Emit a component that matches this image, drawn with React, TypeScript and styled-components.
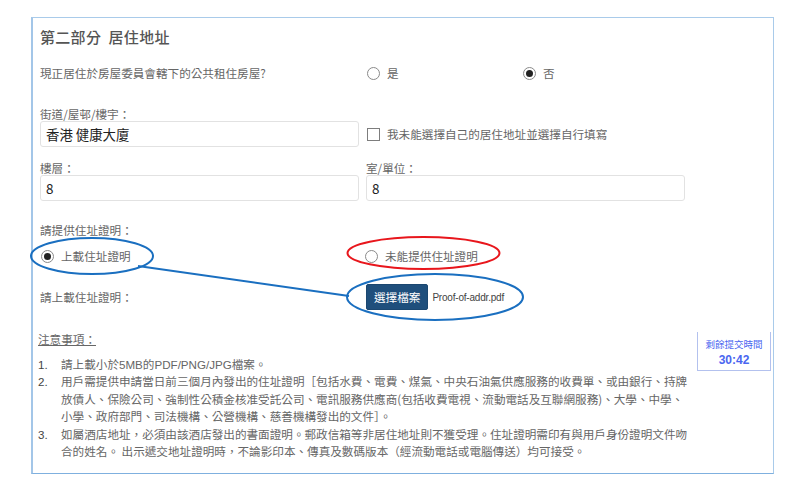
import React from "react";
import styled, { createGlobalStyle } from "styled-components";

const Global = createGlobalStyle`
  html, body { margin: 0; padding: 0; background: #fff; }
  body { font-family: "Noto Sans CJK TC", "Noto Sans", sans-serif; }
  * { box-sizing: border-box; }
`;

const Page = styled.div`
  position: relative;
  width: 800px;
  height: 489px;
  padding: 17px 0 0 31px;
  overflow: hidden;
`;

const Panel = styled.section`
  position: relative;
  width: 743px;
  height: 457px;
  border: 1px solid #a9cbea;
  border-left: 2px solid #a3c6e8;
  border-bottom-color: #7fb0df;
  padding: 9px 0 0 7px;
`;

const Title = styled.h2`
  margin: 0;
  font-size: 15px;
  line-height: 20px;
  font-weight: 500;
  color: #555;
  letter-spacing: 0.3px;
`;

const Row = styled.div<{ $top: number; $h?: number }>`
  display: grid;
  grid-template-columns: 319px 319px;
  column-gap: 7px;
  margin-top: ${(p) => p.$top}px;
  ${(p) => (p.$h ? `height: ${p.$h}px;` : "")}
  align-items: center;
`;

const Text = styled.div`
  font-size: 11.6px;
  line-height: 14px;
  color: #666;
`;

const Field = styled.label`
  display: flex;
  flex-direction: column;
`;

const Input = styled.input`
  height: 26px;
  width: 100%;
  border: 1px solid #e2e2e2;
  border-radius: 3px;
  padding: 0 5px;
  font-family: "Noto Sans CJK TC", sans-serif;
  font-size: 13.4px;
  color: #222;
  background: #fff;
  outline: none;
`;

const Choices = styled.div`
  display: flex;
  align-items: center;
`;

const Choice = styled.div<{ $w?: number; $shift?: number }>`
  display: flex;
  align-items: center;
  gap: 7px;
  ${(p) => (p.$w ? `width: ${p.$w}px;` : "")}
  margin-left: ${(p) => p.$shift ?? 0}px;
  font-size: 11.6px;
  color: #666;
`;

const RadioDot = styled.span<{ $on?: boolean }>`
  width: 13px;
  height: 13px;
  border-radius: 50%;
  border: 1px solid #8a8a8a;
  background: #fff;
  display: flex;
  align-items: center;
  justify-content: center;
  flex-shrink: 0;
  &::after {
    content: "";
    width: 7px;
    height: 7px;
    border-radius: 50%;
    background: ${(p) => (p.$on ? "#222" : "transparent")};
  }
`;

const CheckBox = styled.span`
  width: 13px;
  height: 13px;
  border: 1px solid #7d7d7d;
  background: #fff;
  flex-shrink: 0;
`;

const FileRow = styled.div`
  display: flex;
  align-items: center;
  gap: 4px;
`;

const FileButton = styled.button`
  height: 26px;
  padding: 0 7px;
  border: 1px solid #1b4770;
  border-radius: 2px;
  background: #1f4f7c;
  color: #fff;
  font-family: "Noto Sans CJK TC", sans-serif;
  font-size: 11.6px;
`;

const FileName = styled.span`
  font-family: "Liberation Sans", Arial, sans-serif;
  font-size: 10px;
  letter-spacing: -0.2px;
  color: #444;
`;

const NotesHead = styled.div`
  margin: 22px 0 0 -2px;
  font-size: 11.6px;
  line-height: 14px;
  color: #666;
  text-decoration: underline;
`;

const List = styled.ol`
  margin: 10px 0 0 -2px;
  padding: 0;
  list-style: none;
`;

const Item = styled.li`
  display: grid;
  grid-template-columns: 23px 1fr;
  font-size: 11.6px;
  line-height: 17.4px;
  color: #666;
  white-space: nowrap;
`;

const Num = styled.span`
  font-family: "Liberation Sans", Arial, sans-serif;
  color: #444;
`;

const Latin = styled.span`
  font-family: "Liberation Sans", Arial, sans-serif;
`;

const Timer = styled.div`
  position: absolute;
  left: 664px;
  top: 314px;
  width: 74px;
  height: 39px;
  border: 1px solid #b3c1ee;
  border-top: none;
  display: flex;
  flex-direction: column;
  align-items: center;
  justify-content: center;
  gap: 3px;
  padding-top: 2px;
  color: #4a66f0;
`;

const TimerLabel = styled.div`
  font-size: 9.5px;
  line-height: 12px;
`;

const TimerValue = styled.div`
  font-family: "Liberation Sans", Arial, sans-serif;
  font-weight: 700;
  font-size: 12px;
  line-height: 14px;
`;

const Marks = styled.svg`
  position: absolute;
  left: 0;
  top: 0;
  pointer-events: none;
`;

export default function App() {
  return (
    <>
      <Global />
      <Page>
        <Panel>
          <Title>第二部分&nbsp; 居住地址</Title>

          <Row $top={16} $h={20}>
            <Text>現正居住於房屋委員會轄下的公共租住房屋?</Text>
            <Choices>
              <Choice $w={156} $shift={1}>
                <RadioDot />
                是
              </Choice>
              <Choice>
                <RadioDot $on />
                否
              </Choice>
            </Choices>
          </Row>

          <Row $top={24}>
            <Field>
              <Text>街道/屋邨/樓宇：</Text>
              <Input defaultValue="香港 健康大廈" />
            </Field>
            <Choice $shift={1} style={{ alignSelf: "end", height: 26 }}>
              <CheckBox />
              我未能選擇自己的居住地址並選擇自行填寫
            </Choice>
          </Row>

          <Row $top={14}>
            <Field>
              <Text>樓層：</Text>
              <Input defaultValue="8" />
            </Field>
            <Field>
              <Text>室/單位：</Text>
              <Input defaultValue="8" />
            </Field>
          </Row>

          <Row $top={22}>
            <Text>請提供住址證明：</Text>
          </Row>

          <Row $top={9} $h={20}>
            <Choice $shift={1}>
              <RadioDot $on />
              上載住址證明
            </Choice>
            <Choice $shift={-1}>
              <RadioDot />
              未能提供住址證明
            </Choice>
          </Row>

          <Row $top={18} $h={26}>
            <Text>請上載住址證明：</Text>
            <FileRow>
              <FileButton>選擇檔案</FileButton>
              <FileName>Proof-of-addr.pdf</FileName>
            </FileRow>
          </Row>

          <NotesHead>注意事項：</NotesHead>
          <List>
            <Item>
              <Num>1.</Num>
              <span>
                請上載小於<Latin>5MB</Latin>的<Latin>PDF/PNG/JPG</Latin>檔案。
              </span>
            </Item>
            <Item>
              <Num>2.</Num>
              <span>
                用戶需提供申請當日前三個月內發出的住址證明［包括水費、電費、煤氣、中央石油氣供應服務的收費單、或由銀行、持牌
                <br />
                放債人、保險公司、強制性公積金核准受託公司、電訊服務供應商(包括收費電視、流動電話及互聯網服務)、大學、中學、
                <br />
                小學、政府部門、司法機構、公營機構、慈善機構發出的文件］。
              </span>
            </Item>
            <Item>
              <Num>3.</Num>
              <span>
                如屬酒店地址，必須由該酒店發出的書面證明。郵政信箱等非居住地址則不獲受理。住址證明需印有與用戶身份證明文件吻
                <br />
                合的姓名。 出示遞交地址證明時，不論影印本、傳真及數碼版本（經流動電話或電腦傳送）均可接受。
              </span>
            </Item>
          </List>

          <Timer>
            <TimerLabel>剩餘提交時間</TimerLabel>
            <TimerValue>30:42</TimerValue>
          </Timer>
        </Panel>

        <Marks width="800" height="489" viewBox="0 0 800 489">
          <ellipse cx="92" cy="256" rx="61" ry="18" fill="none" stroke="#1a6fc0" strokeWidth="2" />
          <line x1="138" y1="266" x2="349" y2="296" stroke="#1a6fc0" strokeWidth="2" />
          <ellipse cx="435" cy="297" rx="88" ry="23" fill="none" stroke="#1a6fc0" strokeWidth="2" />
          <ellipse cx="423.5" cy="253" rx="76" ry="16" fill="none" stroke="#e8161c" strokeWidth="2" />
        </Marks>
      </Page>
    </>
  );
}
